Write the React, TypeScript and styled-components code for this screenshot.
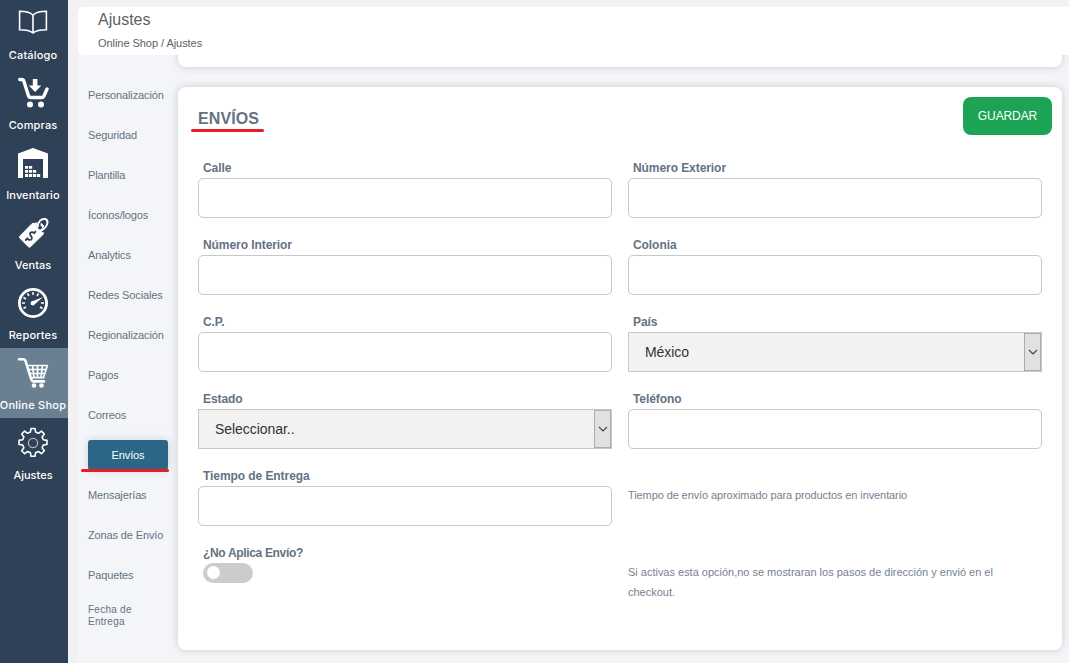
import React from 'react';
import styled, { createGlobalStyle, css } from 'styled-components';

const GlobalStyle = createGlobalStyle`
  * { box-sizing: border-box; }
  body {
    margin: 0;
    background: #f2f2f2;
    color: #647282;
    font-family: "Liberation Sans", Arial, sans-serif;
    overflow: hidden;
  }
`;

const Page = styled.div`
  display: flex;
  height: 663px;
  overflow: hidden;
`;

const Sidebar = styled.nav`
  flex: 0 0 68px;
  min-width: 0;
  margin-top: -2px;
  background: #2e4157;
`;

const SideItem = styled.a<{ $active?: boolean }>`
  display: flex;
  flex-direction: column;
  align-items: center;
  height: 70px;
  padding: 9px 2px 0 0;
  background: ${(p) => (p.$active ? '#6b7f93' : 'transparent')};
  color: #fff;
  svg { display: block; flex: none; }
`;

const SideLabel = styled.span<{ $spacing?: number }>`
  margin-top: 7px;
  font: 500 11px/18px Inter, sans-serif;
  letter-spacing: ${(p) => p.$spacing ?? 0}px;
  white-space: nowrap;
`;

const Main = styled.main`
  display: flex;
  flex-direction: column;
  flex: 1;
  margin-left: 10px;
  padding-top: 7px;
  min-width: 0;
`;

const Header = styled.header`
  position: relative;
  z-index: 1;
  flex: 0 0 48px;
  padding: 3px 20px 0;
  border-radius: 5px 0 0 5px;
  background: #fff;
  color: #5b5f63;
`;

const PageTitle = styled.h1`
  margin: 0;
  font-size: 16px;
  font-weight: 400;
  line-height: 20px;
`;

const Breadcrumb = styled.div`
  margin-top: 6px;
  font-size: 11px;
  line-height: 14px;
  letter-spacing: -0.05px;
`;

const Body = styled.div`
  display: flex;
  flex: 1;
  min-height: 0;
  background: #f4f5f8;
`;

const Menu = styled.nav`
  flex: 0 0 100px;
  padding: 20px 10px 0;
`;

const MenuSlot = styled.div`
  display: flex;
  align-items: center;
  height: 40px;
`;

const underline = css<{ $left: number; $width: number; $bottom: number }>`
  &::after {
    content: '';
    position: absolute;
    left: ${(p) => p.$left}px;
    bottom: ${(p) => p.$bottom}px;
    width: ${(p) => p.$width}px;
    height: 3px;
    border-radius: 2px;
    background: #e81c24;
  }
`;

const MenuLink = styled.a<{ $compact?: boolean }>`
  font-size: ${(p) => (p.$compact ? 10 : 11)}px;
  line-height: 12px;
  letter-spacing: ${(p) => (p.$compact ? 0.25 : -0.13)}px;
  margin-top: ${(p) => (p.$compact ? 2 : 0)}px;
  width: ${(p) => (p.$compact ? '60px' : 'auto')};
  white-space: ${(p) => (p.$compact ? 'normal' : 'nowrap')};
`;

const ActiveLink = styled.a<{ $left: number; $width: number; $bottom: number }>`
  position: relative;
  width: 80px;
  height: 30px;
  border-radius: 3px;
  background: #2b6686;
  box-shadow: 0 0 10px rgba(0, 0, 0, 0.15);
  color: #fff;
  font-size: 11px;
  line-height: 30px;
  letter-spacing: -0.1px;
  text-align: center;
  ${underline}
`;

const Cards = styled.div`
  display: flex;
  flex-direction: column;
  flex: 1;
  gap: 20px;
  padding-right: 7px;
`;

const Card = styled.section`
  border-radius: 8px;
  background: #fff;
  box-shadow: 0 0 8px rgba(0, 0, 0, 0.17);
`;

const PreviousCard = styled(Card)`
  height: 32px;
  margin-top: -20px;
`;

const FormCard = styled(Card)`
  height: 563px;
  padding: 10px 20px;
`;

const CardHeader = styled.div`
  display: flex;
  justify-content: space-between;
  align-items: flex-start;
  height: 61px;
  margin-right: -10px;
`;

const CardTitle = styled.h2<{ $left: number; $width: number; $bottom: number }>`
  position: relative;
  margin: 12px 0 0;
  font-size: 16px;
  line-height: 20px;
  letter-spacing: 0.1px;
  ${underline}
`;

const SaveButton = styled.button`
  width: 89px;
  height: 38px;
  padding: 0;
  border: 0;
  border-radius: 8px;
  background: #1ca353;
  color: #fff;
  font: 12px "Liberation Sans", Arial, sans-serif;
  letter-spacing: -0.1px;
`;

const FormGrid = styled.div`
  display: grid;
  grid-template-columns: 414px 414px;
  column-gap: 16px;
  grid-auto-rows: 77px;
`;

const Field = styled.div`
  display: flex;
  flex-direction: column;
`;

const Label = styled.label<{ $spacing?: number }>`
  padding-left: 5px;
  font-size: 12px;
  font-weight: 700;
  line-height: 20px;
  letter-spacing: ${(p) => p.$spacing ?? -0.07}px;
`;

const Input = styled.input`
  height: 40px;
  padding: 0 16px;
  border: 1px solid #c8c8c8;
  border-radius: 5px;
  background: #fff;
`;

const SelectBox = styled.div`
  display: flex;
  justify-content: space-between;
  align-items: center;
  height: 40px;
  padding-left: 16px;
  border: 1px solid #c8c8c8;
  background: #f2f2f2;
  color: #333;
  font-size: 14px;
  letter-spacing: -0.05px;
`;

const SelectArrow = styled.span`
  display: flex;
  align-items: center;
  justify-content: center;
  width: 17px;
  height: 38px;
  border: 1px solid #adadad;
  background: #e1e1e1;
`;

const Hint = styled.p<{ $spacing?: number }>`
  margin: 19px 0 0;
  color: #768191;
  font-size: 11px;
  line-height: 20px;
  letter-spacing: ${(p) => p.$spacing ?? 0}px;
`;

const Toggle = styled.span`
  width: 50px;
  height: 20px;
  margin: 0 0 0 5px;
  padding: 3px 4px;
  border-radius: 10px;
  background: #ccc;
  &::before {
    content: '';
    display: block;
    width: 13px;
    height: 13px;
    border-radius: 50%;
    background: #fff;
  }
`;

const Icon = ({ children }: { children: React.ReactNode }) => (
  <svg width="32" height="32" viewBox="0 0 32 32" fill="none" stroke="currentColor" strokeLinecap="round" strokeLinejoin="round">
    {children}
  </svg>
);

const BookIcon = () => (
  <Icon>
    <path strokeWidth="1.6" strokeLinejoin="miter" d="M16 8.2C13 4.5 8 4.2 2.6 4.2v18.6c5.5 0 10 .3 13.4 3.2 3.4-2.9 8-3.2 13.4-3.2V4.2C24 4.2 19 4.5 16 8.2Zm0 0V26" />
  </Icon>
);

const PurchaseIcon = () => (
  <Icon>
    <path strokeWidth="3.400" d="M2.700 2.500h2c1.300 0 1.800.5 2.200 1.700l4.500 14.300c.5 1.500 1 2 2.400 2h10.700c1.400 0 2-.6 2.500-1.600L30 12" />
    <path fill="currentColor" stroke="none" d="M15.800 2h4.600v6.500h4L18.100 15l-6.300-6.500h4Z" />
    <circle cx="13" cy="27.500" r="3" fill="currentColor" stroke="none" />
    <circle cx="24" cy="27.500" r="3" fill="currentColor" stroke="none" />
  </Icon>
);

const WarehouseIcon = () => (
  <Icon>
    <path fill="currentColor" stroke="none" fillRule="evenodd" d="M16 1 31 6.500V31h-5V12H6v19H1V6.500Z" />
    <path fill="currentColor" stroke="none" d="M8 19h3.200v2.800H8zm4 0h3.200v2.800H12zM8 23h3.200v2.800H8zm4 0h3.200v2.800H12zm4 0h3.200v2.800H16zM8 27h3.200v3H8zm4 0h3.200v3H12zm4 0h3.200v3H16zm4 0h3.200v3H20z" />
  </Icon>
);

const TagIcon = () => (
  <Icon>
    <path fill="currentColor" strokeWidth="1" d="m15.500 6.500 8-.8 3.600 3.600-.9 8L13.500 29.700q-1.100 1-2.200 0L3 21.200q-1-1.100 0-2.200Z" />
    <circle cx="23" cy="10.500" r="2" fill="#2e4157" stroke="none" />
    <path strokeWidth="3.600" stroke="#2e4157" d="M21.500 9C21.500 4 25 1.500 28 2c3.500 1 3 7-1.800 11.500" />
    <path strokeWidth="2" d="M20.800 9.500C20.800 4.500 24.500 1.300 28 2c4 1 3.200 7.500-3.500 11.500" />
    <path strokeWidth="1.800" stroke="#2e4157" d="M17 16.200c-1.800-2-4.500-.8-3.800 1.400.7 2 2.500 2.600 1.500 4.300-1 1.500-3.400 1.200-4.500-.7M17.200 16l1.300-1.300M10.200 21.500l-1.500 1.500" />
  </Icon>
);

const GaugeIcon = () => (
  <Icon>
    <circle cx="16" cy="16" r="13.600" strokeWidth="2.800" />
    <path strokeWidth="1.500" strokeLinecap="butt" d="M16 5v3M10.500 6.500 12 9M6.500 10.500 9 12M5 16h3M6.500 21.500 9 20M21.500 6.500 20 9M27 16h-3M25.500 21.500 23 20" />
    <path fill="currentColor" stroke="none" d="m26 10-8.200 7.300a2.300 2.300 0 1 1-1.800-3.400Z" />
  </Icon>
);

const CartIcon = () => (
  <Icon>
    <path strokeWidth="2.600" d="M2 2.200h4.500c1.300 0 1.700.7 2 1.700l5.700 18.300c.5 1.500 1.100 2.200 2.500 2.200H27" />
    <path strokeWidth="1.700" d="M10 8.500h20.300l-3.800 12.200H14M11.500 12.500h17M12.800 16.500h14.500M15.500 8.500l1.500 12M20.500 8.500v12M25.500 8.500l-1.500 12" />
    <circle cx="17" cy="28.500" r="2.300" fill="currentColor" stroke="none" />
    <circle cx="24.500" cy="28.500" r="2.300" fill="currentColor" stroke="none" />
  </Icon>
);

const GearIcon = () => (
  <Icon>
    <path strokeWidth="1.600" d="m13.400 5.100.6-3.600h4l.6 3.600 2.800 1.200 3-2.200 2.900 2.900-2.200 3 1.200 2.800 3.700.6v4l-3.700.6-1.200 2.800 2.200 3-2.900 2.900-3-2.200-2.800 1.200-.6 3.600h-4l-.6-3.600-2.800-1.200-3 2.200-2.900-2.900 2.200-3-1.200-2.800-3.700-.6v-4l3.700-.6 1.200-2.800-2.200-3 2.900-2.900 3 2.200Z" />
    <circle cx="16" cy="16" r="4.600" strokeWidth="1.300" opacity="0.6" />
  </Icon>
);

const sections = [
  { label: 'Catálogo', icon: BookIcon, spacing: 0.15 },
  { label: 'Compras', icon: PurchaseIcon, spacing: 0.15 },
  { label: 'Inventario', icon: WarehouseIcon, spacing: 0.1 },
  { label: 'Ventas', icon: TagIcon, spacing: 0.05 },
  { label: 'Reportes', icon: GaugeIcon, spacing: 0.15 },
  { label: 'Online Shop', icon: CartIcon, active: true, spacing: 0.25 },
  { label: 'Ajustes', icon: GearIcon, spacing: 0 },
];

const menu = [
  'Personalización', 'Seguridad', 'Plantilla', 'Íconos/logos', 'Analytics', 'Redes Sociales',
  'Regionalización', 'Pagos', 'Correos', 'Envíos', 'Mensajerías', 'Zonas de Envío', 'Paquetes',
  'Fecha de Entrega',
];

const TextField = ({ label }: { label: string }) => (
  <Field>
    <Label>{label}</Label>
    <Input aria-label={label} />
  </Field>
);

const SelectField = ({ label, value }: { label: string; value: string }) => (
  <Field>
    <Label>{label}</Label>
    <SelectBox>
      {value}
      <SelectArrow>
        <svg width="10" height="6" viewBox="0 0 10 6" fill="none" stroke="#444" strokeWidth="1.200">
          <path d="M1 1l4 4 4-4" />
        </svg>
      </SelectArrow>
    </SelectBox>
  </Field>
);

export default function App() {
  return (
    <>
      <GlobalStyle />
      <Page>
        <Sidebar>
          {sections.map(({ label, icon: SectionIcon, active, spacing }) => (
            <SideItem key={label} $active={active}>
              <SectionIcon />
              <SideLabel $spacing={spacing}>{label}</SideLabel>
            </SideItem>
          ))}
        </Sidebar>
        <Main>
          <Header>
            <PageTitle>Ajustes</PageTitle>
            <Breadcrumb>Online Shop / Ajustes</Breadcrumb>
          </Header>
          <Body>
            <Menu>
              {menu.map((item) => (
                <MenuSlot key={item}>
                  {item === 'Envíos' ? (
                    <ActiveLink $left={-7} $width={88} $bottom={-2}>{item}</ActiveLink>
                  ) : (
                    <MenuLink $compact={item === 'Fecha de Entrega'}>{item}</MenuLink>
                  )}
                </MenuSlot>
              ))}
            </Menu>
            <Cards>
              <PreviousCard />
              <FormCard>
                <CardHeader>
                  <CardTitle $left={-7} $width={73} $bottom={-3}>ENVÍOS</CardTitle>
                  <SaveButton>GUARDAR</SaveButton>
                </CardHeader>
                <FormGrid>
                  <TextField label="Calle" />
                  <TextField label="Número Exterior" />
                  <TextField label="Número Interior" />
                  <TextField label="Colonia" />
                  <TextField label="C.P." />
                  <SelectField label="País" value="México" />
                  <SelectField label="Estado" value="Seleccionar.." />
                  <TextField label="Teléfono" />
                  <TextField label="Tiempo de Entrega" />
                  <Hint $spacing={-0.1}>Tiempo de envío aproximado para productos en inventario</Hint>
                  <Field>
                    <Label $spacing={-0.33}>¿No Aplica Envío?</Label>
                    <Toggle />
                  </Field>
                  <Hint $spacing={-0.01}>Si activas esta opción,no se mostraran los pasos de dirección y envió en el checkout.</Hint>
                </FormGrid>
              </FormCard>
            </Cards>
          </Body>
        </Main>
      </Page>
    </>
  );
}
